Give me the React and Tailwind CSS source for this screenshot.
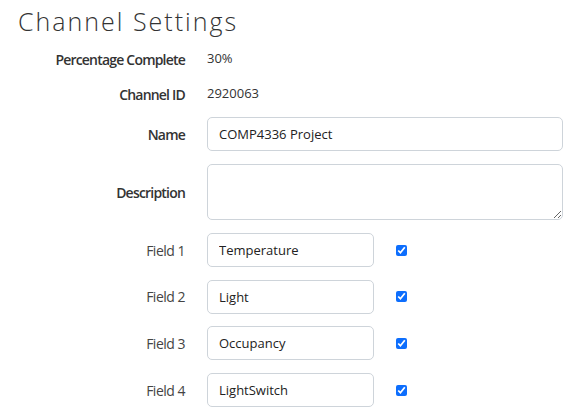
import { useState } from "react";

const fields = [
  { label: "Field 1", value: "Temperature" },
  { label: "Field 2", value: "Light" },
  { label: "Field 3", value: "Occupancy" },
  { label: "Field 4", value: "LightSwitch" },
];

export default function App() {
  const [checked, setChecked] = useState([true, true, true, true]);

  return (
    <div className="min-h-screen bg-white text-[#333] text-[14px]" style={{ fontFamily: '"Open Sans", "Liberation Sans", sans-serif' }}>
      <h1 className="pl-[18px] pt-[6px] text-[25px] leading-[31px] font-light tracking-[2px] text-[#333]">
        Channel Settings
      </h1>

      <div className="mt-[12px] flex flex-col">
        {/* static rows */}
        <div className="flex items-center h-[20px]">
          <div className="w-[185px] text-right font-semibold tracking-[-0.8px]">Percentage Complete</div>
          <div className="pl-[22px] text-[13px]">30%</div>
        </div>
        <div className="flex items-center h-[20px] mt-[15px]">
          <div className="w-[185px] text-right font-semibold tracking-[-0.8px]">Channel ID</div>
          <div className="pl-[22px] text-[13px]">2920063</div>
        </div>

        {/* name */}
        <div className="flex items-center mt-[13px]">
          <label className="w-[185px] text-right font-semibold tracking-[-0.8px]">Name</label>
          <input
            defaultValue="COMP4336 Project"
            className="ml-[22px] w-[356px] h-[34px] px-[11px] border border-[#ced4da] rounded-[5px] text-[13px] text-[#222] outline-none"
          />
        </div>

        {/* description */}
        <div className="flex items-center mt-[13px]">
          <label className="w-[185px] text-right font-semibold tracking-[-0.8px]">Description</label>
          <textarea className="ml-[22px] w-[356px] h-[56px] px-[11px] py-[6px] border border-[#ced4da] rounded-[5px] text-[13px] outline-none" />
        </div>

        {/* fields */}
        <div className="mt-[13px] flex flex-col gap-[12.7px]">
          {fields.map((f, i) => (
            <div key={f.label} className="flex items-center">
              <label className="w-[185px] text-right text-[#444] tracking-[-0.5px]">{f.label}</label>
              <input
                defaultValue={f.value}
                className="ml-[22px] w-[167px] h-[34px] px-[11px] border border-[#ced4da] rounded-[5px] text-[13px] text-[#222] outline-none"
              />
              <input
                type="checkbox"
                checked={checked[i]}
                onChange={() => setChecked(checked.map((c, j) => (j === i ? !c : c)))}
                className="ml-[22px] w-[11px] h-[11px] accent-[#0d6efd]"
              />
            </div>
          ))}
        </div>
      </div>
    </div>
  );
}
